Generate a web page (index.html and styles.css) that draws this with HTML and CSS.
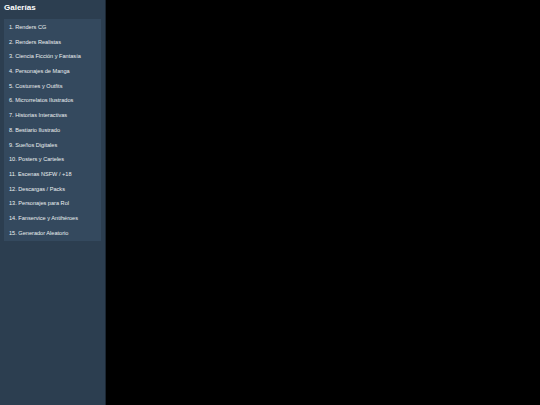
FILE: index.html
```html
<!DOCTYPE html>
<html lang="es">
<head>
<meta charset="utf-8">
<title>Galerías</title>
<link rel="stylesheet" href="styles.css">
</head>
<body>
<div class="layout">
  <aside class="sidebar">
    <h2 class="sidebar-title">Galerías</h2>
    <ul class="gallery-list">
      <li>1. Renders CG</li>
      <li>2. Renders Realistas</li>
      <li>3. Ciencia Ficción y Fantasía</li>
      <li>4. Personajes de Manga</li>
      <li>5. Costumes y Outfits</li>
      <li>6. Microrrelatos Ilustrados</li>
      <li>7. Historias Interactivas</li>
      <li>8. Bestiario Ilustrado</li>
      <li>9. Sueños Digitales</li>
      <li>10. Posters y Carteles</li>
      <li>11. Escenas NSFW / +18</li>
      <li>12. Descargas / Packs</li>
      <li>13. Personajes para Rol</li>
      <li>14. Fanservice y Antihéroes</li>
      <li>15. Generador Aleatorio</li>
    </ul>
  </aside>
  <main class="content"></main>
</div>
</body>
</html>
```
FILE: styles.css
```css
html, body {
  margin: 0;
  padding: 0;
  height: 100%;
  background: #000;
  font-family: "Liberation Sans", Arial, sans-serif;
}

.layout {
  display: flex;
  height: 100%;
}

.sidebar {
  width: 97px;
  padding: 0 4px;
  background: #2c3e50;
  border-right: 1px solid #1b2632;
  flex-shrink: 0;
}

.sidebar-title {
  margin: 0;
  padding: 3px 0 0;
  height: 16px;
  font-size: 8px;
  line-height: 10px;
  font-weight: bold;
  color: #ffffff;
}

.gallery-list {
  list-style: none;
  margin: 0;
  padding: 1px 0;
  background: #34495e;
}

.gallery-list li {
  height: 14.7px;
  line-height: 14.7px;
  padding-left: 5px;
  font-size: 5.6px;
  color: #ecf0f1;
  white-space: nowrap;
}

.content {
  flex: 1;
  background: #000;
}
```
